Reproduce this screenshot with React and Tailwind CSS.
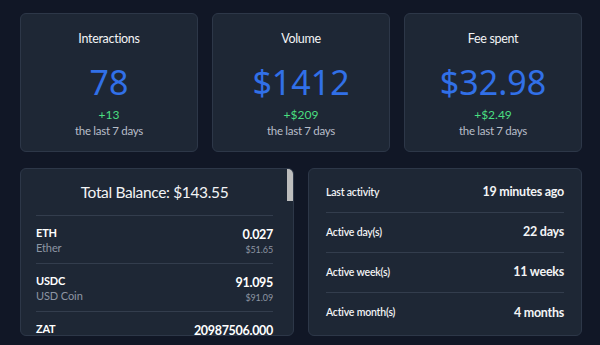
import React from 'react';

const stats = [
  { title: 'Interactions', value: '78', delta: '+13' },
  { title: 'Volume', value: '$1412', delta: '+$209' },
  { title: 'Fee spent', value: '$32.98', delta: '+$2.49' },
];

const tokens = [
  { symbol: 'ETH', name: 'Ether', amount: '0.027', usd: '$51.65' },
  { symbol: 'USDC', name: 'USD Coin', amount: '91.095', usd: '$91.09' },
  { symbol: 'ZAT', name: 'Zat', amount: '20987506.000', usd: '$0.81' },
];

const activity = [
  { label: 'Last activity', value: '19 minutes ago' },
  { label: 'Active day(s)', value: '22 days' },
  { label: 'Active week(s)', value: '11 weeks' },
  { label: 'Active month(s)', value: '4 months' },
];

function StatCard({ title, value, delta }) {
  return (
    <div className="h-[139px] bg-[#1e2735] border border-[#2d3748] rounded-md flex flex-col items-center pt-[16px]">
      <h3 className="text-[12.5px] leading-[18px] tracking-[-0.3px] text-[#f3f4f6]">{title}</h3>
      <div className="mt-[13px] text-[34px] leading-[42px] text-[#3170e8]" style={{ fontFamily: '"Noto Sans", sans-serif' }}>
        {value}
      </div>
      <div className="mt-[5px] text-[12px] leading-[14px] text-[#4ade80]">{delta}</div>
      <div className="mt-[1px] text-[11.5px] leading-[16px] tracking-[-0.3px] text-[#b8bec9]">the last 7 days</div>
    </div>
  );
}

export default function App() {
  return (
    <div
      className="w-[600px] h-[345px] overflow-hidden bg-[#111726] pt-[13px] pl-[20px] pr-[18px]"
      style={{ fontFamily: 'Lato, "Noto Sans", sans-serif' }}
    >
      <div className="grid grid-cols-3 gap-[14px]">
        {stats.map((s) => (
          <StatCard key={s.title} {...s} />
        ))}
      </div>

      <div className="grid grid-cols-2 gap-[14px] mt-[16px]">
        {/* balances */}
        <div className="relative h-[168px] overflow-hidden bg-[#1e2735] border border-[#2d3748] rounded-md pl-[15px] pr-[20px]">
          <div className="absolute right-0 top-0 w-[6px] h-[32px] bg-[#bdbdbd]" />
          <div className="h-[47px] pt-[2px] flex items-center justify-center border-b border-[#333d4d] text-[15.5px] tracking-[-0.35px] text-[#f3f4f6]">
            Total Balance: $143.55
          </div>
          {tokens.map((t) => (
            <div key={t.symbol} className="h-[48px] pt-[2px] flex items-center justify-between border-b border-[#333d4d]">
              <div className="flex flex-col">
                <span className="text-[11px] leading-[14px] font-bold tracking-[-0.2px] text-white">{t.symbol}</span>
                <span className="text-[11px] leading-[15px] tracking-[-0.1px] text-[#8d95a3]">{t.name}</span>
              </div>
              <div className="flex flex-col items-end">
                <span className="text-[12.5px] leading-[17px] font-bold tracking-[-0.3px] text-white">{t.amount}</span>
                <span className="text-[9px] leading-[13px] tracking-[-0.1px] text-[#8d95a3]">{t.usd}</span>
              </div>
            </div>
          ))}
        </div>

        {/* activity */}
        <div className="h-[168px] bg-[#1e2735] border border-[#2d3748] rounded-md px-[17px] pt-[4px]">
          {activity.map((a, i) => (
            <div
              key={a.label}
              className={
                'h-[40px] flex items-center justify-between ' +
                (i < activity.length - 1 ? 'border-b border-[#333d4d]' : '')
              }
            >
              <span className="text-[10.5px] font-semibold tracking-[-0.2px] text-[#f3f4f6]">{a.label}</span>
              <span className="text-[12.5px] font-bold tracking-[-0.25px] text-[#f3f4f6]">{a.value}</span>
            </div>
          ))}
        </div>
      </div>
    </div>
  );
}
